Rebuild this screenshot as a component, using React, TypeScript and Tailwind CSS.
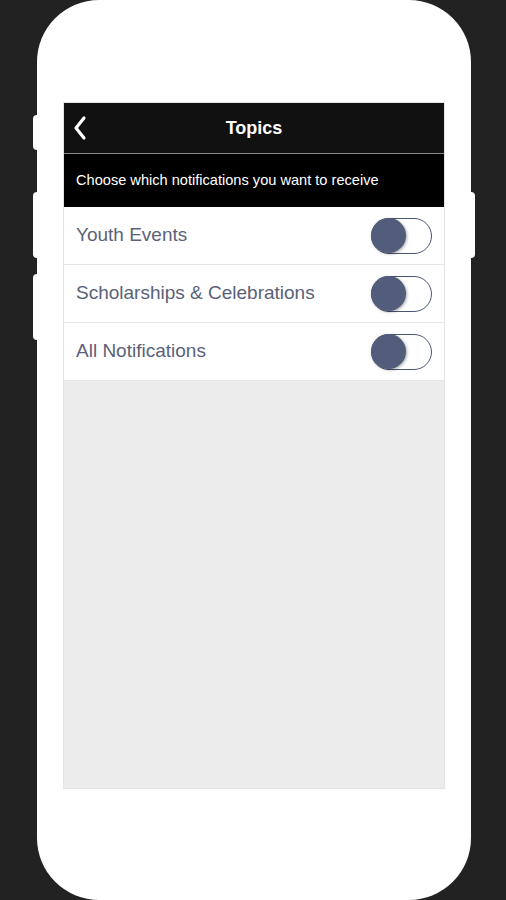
import React from 'react';

const topics = ['Youth Events', 'Scholarships & Celebrations', 'All Notifications'];

function Toggle() {
  return (
    <div className="relative h-[36px] w-[61px] rounded-full border-[1.5px] border-[#4a5673] bg-white">
      <div className="absolute left-[-1px] top-[-1px] h-[35px] w-[35px] rounded-full bg-[#515d7a] shadow-[1px_1px_3px_rgba(0,0,0,0.35)]" />
    </div>
  );
}

export default function App() {
  return (
    <div
      className="relative h-[900px] w-[506px] overflow-hidden bg-[#222222]"
      style={{ fontFamily: '"Liberation Sans", Arial, sans-serif' }}
    >
      {/* side buttons */}
      <div className="absolute left-[33px] top-[115px] h-[35px] w-[6px] rounded-l-sm bg-white" />
      <div className="absolute left-[33px] top-[192px] h-[66px] w-[6px] rounded-l-sm bg-white" />
      <div className="absolute left-[33px] top-[274px] h-[66px] w-[6px] rounded-l-sm bg-white" />
      <div className="absolute left-[469px] top-[192px] h-[66px] w-[6px] rounded-r-sm bg-white" />

      {/* phone body */}
      <div className="ml-[37px] flex h-[900px] w-[434px] flex-col rounded-[62px] bg-white pt-[102px]">
        <div className="mx-[26px] flex h-[687px] flex-col border border-[#e4e4e4] bg-[#ececec]">
          <div className="relative flex h-[50px] items-center justify-center bg-[#111111]">
            <svg
              className="absolute left-[8px] top-[12px]"
              width="16"
              height="26"
              viewBox="0 0 16 26"
              fill="none"
            >
              <path d="M12 3 L4 13 L12 23" stroke="white" strokeWidth="3.2" strokeLinecap="round" strokeLinejoin="round" />
            </svg>
            <span className="text-[18px] font-bold text-white">Topics</span>
          </div>
          <div className="h-px bg-[#8a8a8a]" />
          <div className="flex h-[53px] items-center bg-black pl-[12px]">
            <span className="text-[14.6px] text-white">Choose which notifications you want to receive</span>
          </div>
          {topics.map((t) => (
            <div
              key={t}
              className="flex h-[58px] items-center justify-between border-b border-[#e6e6e6] bg-white pl-[12px] pr-[12px]"
            >
              <span className="text-[19px] text-[#5b6178]">{t}</span>
              <Toggle />
            </div>
          ))}
        </div>
      </div>
    </div>
  );
}
